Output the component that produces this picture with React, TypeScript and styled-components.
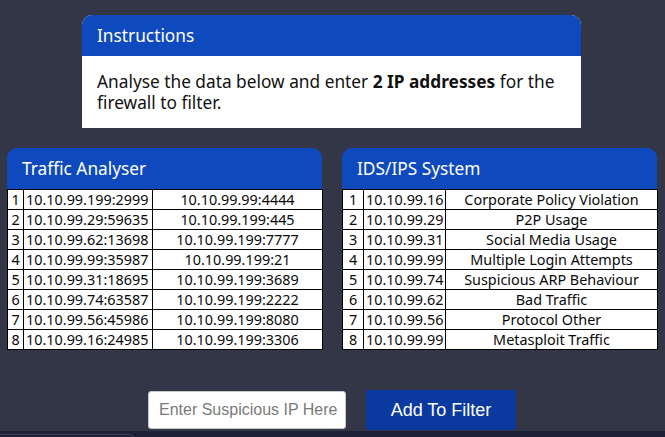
import React from "react";
import styled, { createGlobalStyle } from "styled-components";

const Global = createGlobalStyle`
  html, body { margin: 0; padding: 0; background: #333647; }
  body { font-family: "Noto Sans", "Open Sans", sans-serif; }
  * { box-sizing: border-box; }
`;

const Page = styled.div`
  height: 437px;
  background: #333647;
  display: flex;
  flex-direction: column;
  padding-top: 15px;
  overflow: hidden;
  & > * { flex-shrink: 0; }
`;

const InstructionsCard = styled.section`
  width: 499px;
  margin-left: 82px;
  background: #ffffff;
  border-radius: 10px 10px 0 0;
  overflow: hidden;
`;

const CardHeader = styled.div`
  height: 41px;
  line-height: 41px;
  background: #0e4abd;
  color: #ffffff;
  font-size: 17.3px;
  padding-left: 15px;
`;

const CardBody = styled.div`
  height: 72px;
  padding: 15px 15px;
  font-size: 17.3px;
  line-height: 21px;
  color: #111111;
  b { font-weight: 700; }
`;

const PanelRow = styled.div`
  display: flex;
  gap: 20px;
  padding-left: 7px;
  margin-top: 20px;
`;

const Panel = styled.section`
  width: 315px;
`;

const PanelHeader = styled.div`
  height: 41px;
  line-height: 41px;
  background: #0e4abd;
  color: #ffffff;
  font-size: 17.3px;
  padding-left: 15px;
  border-radius: 10px 10px 0 0;
`;

const Table = styled.table`
  width: 100%;
  border-collapse: collapse;
  background: #ffffff;
  font-size: 14.4px;
  color: #0a0a0a;
  table-layout: fixed;
`;

const Cell = styled.td<{ $center?: boolean }>`
  border: 1px solid #000000;
  height: 20px;
  padding: 0 2px;
  line-height: 18px;
  white-space: nowrap;
  overflow: hidden;
  text-align: ${(p) => (p.$center ? "center" : "left")};
`;

const Controls = styled.div`
  display: flex;
  align-items: center;
  justify-content: center;
  gap: 20px;
  margin-top: 40px;
  margin-left: -1px;
`;

const IpInput = styled.input`
  width: 198px;
  height: 38px;
  border: 1px solid #c8c8c8;
  border-radius: 3px;
  padding: 0 2px 0 10px;
  font-family: "Liberation Sans", Arial, sans-serif;
  font-size: 16px;
  color: #222;
  background: #fff;
  &::placeholder { color: #7a7a7a; }
`;

const FilterButton = styled.button`
  width: 150px;
  height: 40px;
  border: none;
  border-radius: 3px;
  background: #0a3aa0;
  color: #ffffff;
  font-family: "Liberation Sans", Arial, sans-serif;
  font-size: 18px;
`;

const Footer = styled.div`
  margin-top: 1px;
  flex: 1 0 auto;
  background: #1c2137;
  padding-top: 3px;
`;

const FooterTab = styled.div`
  width: 135px;
  height: 20px;
  border: 1px solid #3a4160;
  border-radius: 0 6px 0 0;
  border-left: none;
`;

const traffic = [
  ["10.10.99.199:2999", "10.10.99.99:4444"],
  ["10.10.99.29:59635", "10.10.99.199:445"],
  ["10.10.99.62:13698", "10.10.99.199:7777"],
  ["10.10.99.99:35987", "10.10.99.199:21"],
  ["10.10.99.31:18695", "10.10.99.199:3689"],
  ["10.10.99.74:63587", "10.10.99.199:2222"],
  ["10.10.99.56:45986", "10.10.99.199:8080"],
  ["10.10.99.16:24985", "10.10.99.199:3306"],
];

const ids = [
  ["10.10.99.16", "Corporate Policy Violation"],
  ["10.10.99.29", "P2P Usage"],
  ["10.10.99.31", "Social Media Usage"],
  ["10.10.99.99", "Multiple Login Attempts"],
  ["10.10.99.74", "Suspicious ARP Behaviour"],
  ["10.10.99.62", "Bad Traffic"],
  ["10.10.99.56", "Protocol Other"],
  ["10.10.99.99", "Metasploit Traffic"],
];

function DataTable({ rows, widths }: { rows: string[][]; widths: number[] }) {
  return (
    <Table>
      <colgroup>
        {widths.map((w, i) => (
          <col key={i} style={{ width: w }} />
        ))}
      </colgroup>
      <tbody>
        {rows.map((r, i) => (
          <tr key={i}>
            <Cell $center>{i + 1}</Cell>
            <Cell>{r[0]}</Cell>
            <Cell $center>{r[1]}</Cell>
          </tr>
        ))}
      </tbody>
    </Table>
  );
}

export default function App() {
  return (
    <>
      <Global />
      <Page>
        <InstructionsCard>
          <CardHeader>Instructions</CardHeader>
          <CardBody>
            Analyse the data below and enter <b>2 IP addresses</b> for the firewall to filter.
          </CardBody>
        </InstructionsCard>
        <PanelRow>
          <Panel>
            <PanelHeader>Traffic Analyser</PanelHeader>
            <DataTable rows={traffic} widths={[16, 129, 170]} />
          </Panel>
          <Panel>
            <PanelHeader>IDS/IPS System</PanelHeader>
            <DataTable rows={ids} widths={[21, 82, 212]} />
          </Panel>
        </PanelRow>
        <Controls>
          <IpInput placeholder="Enter Suspicious IP Here" />
          <FilterButton>Add To Filter</FilterButton>
        </Controls>
        <Footer>
          <FooterTab />
        </Footer>
      </Page>
    </>
  );
}
